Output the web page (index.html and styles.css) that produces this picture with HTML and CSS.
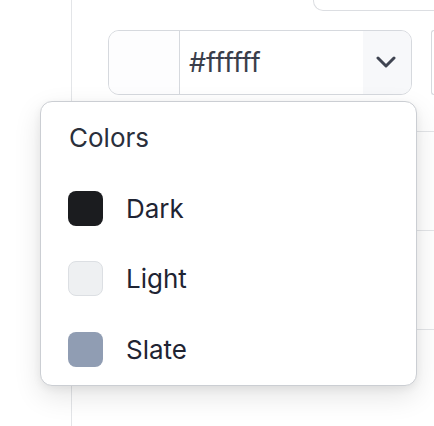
FILE: index.html
```html
<!DOCTYPE html>
<html>
<head>
<meta charset="utf-8">
<link rel="stylesheet" href="styles.css">
</head>
<body>
<div class="layout">
  <aside class="side"></aside>
  <main class="main">
    <div class="topbox"></div>
    <div class="field-row">
      <div class="color-input">
        <div class="preview"></div>
        <div class="hex">#ffffff</div>
        <div class="caret">
          <svg width="20" height="12" viewBox="0 0 20 12"><path d="M2 2 L10 10 L18 2" fill="none" stroke="#3f4451" stroke-width="3" stroke-linecap="round" stroke-linejoin="round"/></svg>
        </div>
      </div>
      <div class="nextbox"></div>
    </div>
    <div class="table">
      <div class="trow"></div>
      <div class="trow"></div>
      <div class="trow"></div>
    </div>
  </main>
</div>
<div class="menu">
  <div class="menu-title">Colors</div>
  <ul class="options">
    <li class="option"><span class="swatch dark"></span><span>Dark</span></li>
    <li class="option"><span class="swatch light"></span><span>Light</span></li>
    <li class="option"><span class="swatch slate"></span><span>Slate</span></li>
  </ul>
</div>
</body>
</html>
```
FILE: styles.css
```css
* { box-sizing: border-box; }
html, body { margin: 0; padding: 0; }
body {
  width: 434px;
  height: 426px;
  overflow: hidden;
  background: #ffffff;
  font-family: Inter, "Noto Sans", sans-serif;
  color: #1f2433;
  position: relative;
}
.layout {
  display: flex;
  height: 426px;
  overflow: hidden;
}
.side {
  width: 72px;
  flex: none;
  border-right: 1px solid #e3e5e8;
}
.main {
  flex: 1;
  min-width: 0;
  overflow: hidden;
}
.topbox {
  margin-left: 241px;
  width: 121px;
  height: 11px;
  border: 1px solid #dcdee2;
  border-top: none;
  border-right: none;
  border-bottom-left-radius: 10px;
}
.field-row {
  display: flex;
  gap: 19px;
  margin-top: 19px;
  margin-left: 36px;
}
.color-input {
  width: 304px;
  height: 65px;
  flex: none;
  display: flex;
  border: 1px solid #d6d9de;
  border-radius: 11px;
  overflow: hidden;
}
.preview {
  width: 71px;
  flex: none;
  background: #fdfdfe;
  border-right: 1px solid #d6d9de;
}
.hex {
  flex: 1;
  display: flex;
  align-items: center;
  padding-left: 9px;
  font-size: 27px;
  color: #3a3e4a;
  padding-bottom: 1px;
}
.caret {
  width: 48px;
  flex: none;
  background: #f7f8fa;
  display: flex;
  align-items: center;
  justify-content: center;
  padding-right: 2px;
  padding-bottom: 2px;
}
.nextbox {
  width: 3px;
  height: 65px;
  flex: none;
  border: 1px solid #d6d9de;
  border-right: none;
  border-radius: 11px 0 0 11px;
}
.table {
  margin-top: 1px;
}
.trow {
  height: 99px;
  border-bottom: 1px solid #e3e5e8;
}
.trow:first-child {
  height: 36px;
}
.menu {
  position: absolute;
  left: 40px;
  top: 101px;
  width: 377px;
  height: 285px;
  background: #ffffff;
  border: 1px solid #cbced3;
  border-radius: 12px;
  box-shadow: 0 10px 28px rgba(0, 0, 0, 0.11), 0 3px 8px rgba(0, 0, 0, 0.06);
  padding: 20px 27px 18px 27px;
}
.menu-title {
  font-size: 26px;
  line-height: 32px;
  color: #2a2f3b;
  padding-left: 1px;
  margin-bottom: 36.5px;
}
.options {
  list-style: none;
  margin: 0;
  padding: 0;
  display: flex;
  flex-direction: column;
  gap: 35.5px;
}
.option {
  display: flex;
  align-items: center;
  gap: 23px;
  height: 35px;
  font-size: 26px;
  color: #1f2433;
}
.swatch {
  width: 35px;
  height: 35px;
  border-radius: 8px;
  flex: none;
}
.dark { background: #1b1c1f; }
.light { background: #eef0f2; border: 1px solid #dcdfe3; }
.slate { background: #909db3; }
```
